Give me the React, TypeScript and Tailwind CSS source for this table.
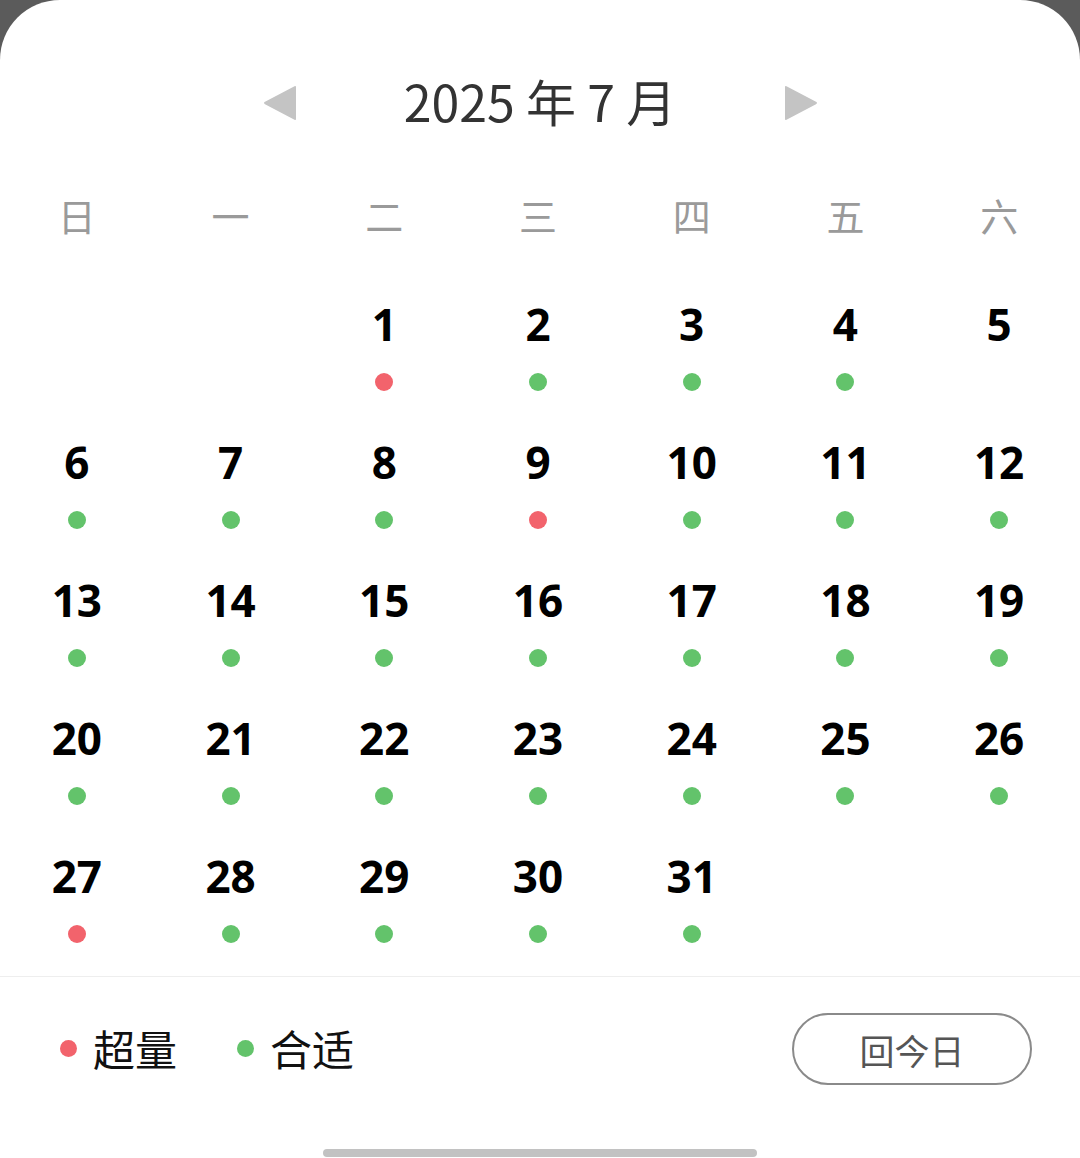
import React from "react";

type Status = "over" | "ok" | null;

const RED = "over";
const cells: { d: number | null; s: Status }[] = [];
const redDays = new Set([1, 9, 27]);
for (let i = 0; i < 2; i++) cells.push({ d: null, s: null });
for (let d = 1; d <= 31; d++) {
  cells.push({ d, s: d === 5 ? null : redDays.has(d) ? RED : "ok" });
}
while (cells.length % 7 !== 0) cells.push({ d: null, s: null });

const weekdays = ["日", "一", "二", "三", "四", "五", "六"];

const cjk = { fontFamily: '"Noto Sans CJK SC", "Noto Sans", sans-serif' };
const num = { fontFamily: '"Noto Sans", "Open Sans", sans-serif' };

function Arrow({ dir }: { dir: "left" | "right" }) {
  return (
    <svg width="36" height="36" viewBox="0 0 36 36">
      {dir === "left" ? (
        <path
          d="M34 2 L34 34 Q34 35.5 32.5 34.7 L3 19.2 Q1 18 3 16.8 L32.5 1.3 Q34 0.5 34 2 Z"
          fill="#c4c4c4"
        />
      ) : (
        <path
          d="M2 2 L2 34 Q2 35.5 3.5 34.7 L33 19.2 Q35 18 33 16.8 L3.5 1.3 Q2 0.5 2 2 Z"
          fill="#c4c4c4"
        />
      )}
    </svg>
  );
}

export default function App() {
  const rows: typeof cells[] = [];
  for (let i = 0; i < cells.length; i += 7) rows.push(cells.slice(i, i + 7));
  return (
    <div className="w-[1080px] h-[1158px] bg-[#5b5b5b] overflow-hidden">
      <div className="w-full h-full bg-white rounded-t-[60px] flex flex-col">
        {/* header */}
        <div className="mt-[30px] h-[146px] flex items-center justify-center">
          <div className="w-[36px] flex justify-center">
            <Arrow dir="left" />
          </div>
          <div
            className="w-[485px] text-center text-[50px] text-[#333333] leading-none -mt-[6px] whitespace-pre"
            style={cjk}
          >
            {"2025 年 7 月"}
          </div>
          <div className="w-[36px] flex justify-center">
            <Arrow dir="right" />
          </div>
        </div>
        {/* weekdays */}
        <div className="w-[1076px] h-[82px] grid grid-cols-7 items-center">
          {weekdays.map((w) => (
            <div
              key={w}
              className="text-center text-[38px] text-[#9a9a9a] leading-none -mt-[4px]"
              style={cjk}
            >
              {w}
            </div>
          ))}
        </div>
        {/* dates */}
        <div className="w-[1076px] flex flex-col">
          {rows.map((r, ri) => (
            <div key={ri} className="h-[138px] grid grid-cols-7">
              {r.map((c, ci) => (
                <div key={ci} className="flex flex-col items-center">
                  {c.d !== null && (
                    <>
                      <div
                        className="mt-[43px] h-[46px] flex items-center text-[44px] font-bold text-black leading-none"
                        style={num}
                      >
                        {c.d}
                      </div>
                      <div className="mt-[26px] h-[18px] flex items-center">
                        {c.s && (
                          <div
                            className={
                              c.s === "over"
                                ? "w-[18px] h-[18px] rounded-full bg-[#f2636c]"
                                : "w-[18px] h-[18px] rounded-full bg-[#63c36b]"
                            }
                          />
                        )}
                      </div>
                    </>
                  )}
                </div>
              ))}
            </div>
          ))}
        </div>
        <div className="mt-[28px] h-px bg-[#eeeeee]" />
        {/* footer */}
        <div className="pt-[36px] pl-[60px] pr-[48px] flex items-center justify-between">
          <div className="flex items-center -mt-[2px]">
            <div className="w-[17px] h-[17px] rounded-full bg-[#f2636c]" />
            <div className="ml-[16px] text-[42px] text-[#111111] leading-none" style={cjk}>
              超量
            </div>
            <div className="ml-[60px] w-[17px] h-[17px] rounded-full bg-[#63c36b]" />
            <div className="ml-[16px] text-[42px] text-[#111111] leading-none" style={cjk}>
              合适
            </div>
          </div>
          <div
            className="w-[240px] h-[72px] rounded-full border-2 border-[#8a8a8a] flex items-center justify-center text-[35px] text-[#555555] leading-none"
            style={cjk}
          >
            回今日
          </div>
        </div>
        <div className="mt-[64px] flex justify-center">
          <div className="w-[434px] h-[8px] rounded-full bg-[#c2c2c2]" />
        </div>
      </div>
    </div>
  );
}
